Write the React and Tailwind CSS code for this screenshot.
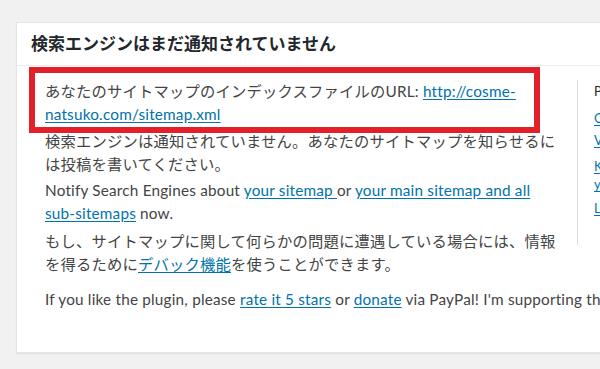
const linkCls = 'text-[#0073aa] underline underline-offset-2';

const App = () => {
  return (
    <div
      className="h-[369px] w-[600px] overflow-hidden bg-[#f1f1f1] pt-[22px] pl-[16px] text-[#444]"
      style={{ fontFamily: 'Lato, "Noto Sans CJK JP", "Noto Sans", sans-serif' }}
    >
      <div className="relative w-[760px] h-[331px] bg-white border border-[#e5e5e5] shadow-[0_1px_1px_rgba(0,0,0,0.06)]">
        <h2 className="h-[43px] flex items-center pl-[14px] border-b border-[#eee] text-[17px] font-bold text-[#23282d] whitespace-nowrap">
          検索エンジンはまだ通知されていません
        </h2>

        <div className="pt-[14px] text-[15.3px] tracking-[0.2px] leading-[22.5px] whitespace-nowrap">
          <div className="flex items-start">
            <div className="w-[560px] pl-[28px]">
              <p>
                あなたのサイトマップのインデックスファイルのURL:{' '}
                <a href="#" className={linkCls}>
                  http://cosme-
                  <br />
                  natsuko.com/sitemap.xml
                </a>
              </p>
              <p className="mt-[5px]">
                検索エンジンは通知されていません。あなたのサイトマップを知らせるに
                <br />
                は投稿を書いてください。
              </p>
              <p className="mt-[4px]">
                Notify Search Engines about{' '}
                <a href="#" className={linkCls}>your sitemap </a> or{' '}
                <a href="#" className={linkCls}>your main sitemap and all</a>
                <br />
                <a href="#" className={linkCls}>sub-sitemaps</a> now.
              </p>
              <p className="mt-[6px]">
                もし、サイトマップに関して何らかの問題に遭遇している場合には、情報
                <br />
                を得るために<a href="#" className={linkCls}>デバック機能</a>を使うことができます。
              </p>
            </div>

            <div className="border-l border-[#ddd] pl-[16px] h-[165px] text-[13px] tracking-normal leading-[22px]">
              <p className="text-[#23282d]">Plugin情報:</p>
              <p className="mt-[5px]">
                <a href="#" className={linkCls}>Quick start</a>
              </p>
              <p>
                <a href="#" className={linkCls}>Visit home</a>
              </p>
              <p className="mt-[6px] leading-[18px]">
                <a href="#" className={linkCls}>Known issues</a>
                <br />
                <a href="#" className={linkCls}>your feedback</a>
              </p>
              <p className="mt-[4px]">
                <a href="#" className={linkCls}>Leave a review</a>
              </p>
            </div>
          </div>

          <p className="pl-[28px] mt-[13px]">
            If you like the plugin, please{' '}
            <a href="#" className={linkCls}>rate it 5 stars</a> or{' '}
            <a href="#" className={linkCls}>donate</a> via PayPal! I'm supporting this plugin since over 10 years!
          </p>
        </div>

        <div className="absolute left-[12px] top-[44px] w-[511px] h-[66px] border-[6px] border-[#e3202a] pointer-events-none" />
      </div>
    </div>
  );
};

export default App;
